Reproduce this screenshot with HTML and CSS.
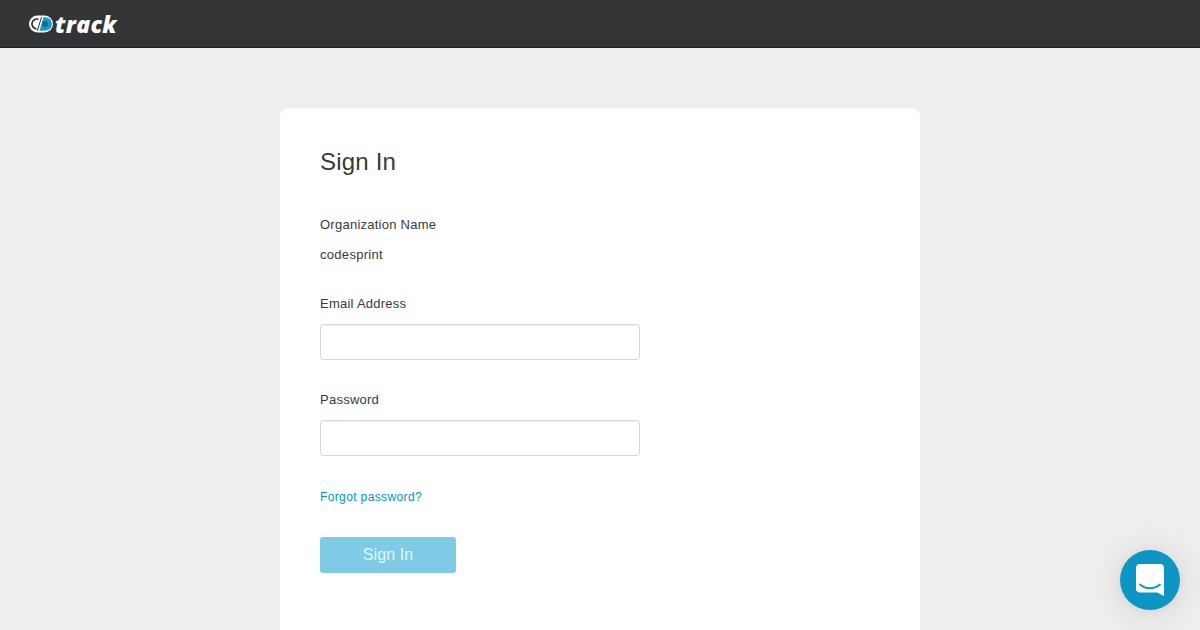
FILE: index.html

```html
<!DOCTYPE html>
<html lang="en">
<head>
  <meta charset="UTF-8">
  <meta name="viewport" content="width=device-width, initial-scale=1.0">
  <title>Sign In</title>
  <link rel="stylesheet" href="styles.css">
</head>
<body>

<!-- Top bar -->
<header class="topbar">
  <a class="logo" href="#">
    <svg class="logo-mark" width="24" height="18" viewBox="0 0 24 18">
      <rect x="0" y="0.500" width="24" height="17" rx="8.500" fill="#fff"/>
      <path d="M9.500 4.300a4.900 4.900 0 1 0 -2 9.500" fill="none" stroke="#333436" stroke-width="1.700"/>
      <path d="M14.500 2.200h1.700a6.800 6.800 0 0 1 0 13.600H10.500z" fill="#1b9ad0"/>
      <circle cx="16" cy="9" r="3" fill="#0e6f9e"/>
      <path d="M12.500 2.200 8.300 15.800" stroke="#333436" stroke-width="1"/>
    </svg>
    <span class="logo-text">track</span>
  </a>
</header>

<!-- Sign in card -->
<main class="page">
  <section class="card">
    <h1 class="card-title">Sign In</h1>
    <form class="form">
      <div class="org">
        <div class="label">Organization Name</div>
        <div class="org-name">codesprint</div>
      </div>
      <div class="field">
        <label class="label" for="email">Email Address</label>
        <input class="input" type="text" id="email">
      </div>
      <div class="field field-last">
        <label class="label" for="password">Password</label>
        <input class="input" type="password" id="password">
      </div>
      <a class="forgot" href="#">Forgot password?</a>
      <button class="btn" type="button" disabled>Sign In</button>
    </form>
  </section>
</main>

<!-- Chat launcher -->
<div class="chat">
  <svg width="28" height="32" viewBox="0 0 28 32">
    <path d="M4 0h20a4 4 0 0 1 4 4v28l-7-3.500H4a4 4 0 0 1-4-4V4a4 4 0 0 1 4-4z" fill="#fff"/>
    <path d="M4 20.500c6 5 14 5 20 0" fill="none" stroke="#0d95c4" stroke-width="1.800" stroke-linecap="round"/>
  </svg>
</div>

</body>
</html>
```

FILE: styles.css

```css
html, body {
  height: 100%;
}
body {
  margin: 0;
  background: #eeeeee;
  color: #3a3a3a;
  font-family: "Liberation Sans", Arial, sans-serif;
  overflow: hidden;
  display: flex;
  flex-direction: column;
}
.topbar {
  height: 47px;
  flex: none;
  background: #333436;
  border-bottom: 1px solid #222;
  display: flex;
  align-items: center;
  padding-left: 29px;
}
.logo {
  display: flex;
  align-items: center;
  gap: 2px;
  color: #fff;
  text-decoration: none;
}
.logo-text {
  font-family: "Open Sans", sans-serif;
  font-weight: 800;
  font-style: italic;
  font-size: 23px;
  line-height: 24px;
  letter-spacing: 0.3px;
}
.page {
  flex: 1;
  min-height: 0;
  display: flex;
  justify-content: center;
  padding-top: 60px;
}
.card {
  width: 640px;
  box-sizing: border-box;
  padding: 40px 40px 0;
  background: #fff;
  border-radius: 8px 8px 0 0;
}
.card-title {
  margin: 0 0 39px;
  font-size: 24px;
  line-height: 28px;
  font-weight: 400;
  letter-spacing: 0.2px;
}
.form {
  display: flex;
  flex-direction: column;
  align-items: flex-start;
}
.label {
  display: block;
  font-size: 13px;
  line-height: 20px;
  letter-spacing: 0.25px;
}
.org {
  margin-bottom: 29px;
}
.org-name {
  margin-top: 10px;
  font-size: 13px;
  line-height: 20px;
  letter-spacing: 0.3px;
}
.field {
  margin-bottom: 30px;
}
.field-last {
  margin-bottom: 31px;
}
.field .label {
  margin-bottom: 10px;
}
.input {
  display: block;
  width: 320px;
  height: 36px;
  box-sizing: border-box;
  border: 1px solid #d8d8d8;
  border-radius: 3px;
  box-shadow: inset 0 1px 1px rgba(0, 0, 0, 0.06);
  background: #fff;
  padding: 0 8px;
}
.forgot {
  font-size: 12px;
  line-height: 20px;
  letter-spacing: 0.37px;
  color: #0095bf;
  text-decoration: none;
}
.btn {
  margin-top: 30px;
  width: 136px;
  height: 36px;
  border: 0;
  border-radius: 3px;
  background: #7fcbe5;
  color: #e4f4fa;
  font-family: inherit;
  font-size: 16px;
  letter-spacing: 0.1px;
}
.chat {
  position: fixed;
  right: 20px;
  bottom: 20px;
  width: 60px;
  height: 60px;
  border-radius: 50%;
  background: #0d95c4;
  box-shadow: 0 1px 6px rgba(0, 0, 0, 0.06), 0 2px 32px rgba(0, 0, 0, 0.12);
  display: flex;
  align-items: center;
  justify-content: center;
}
```
